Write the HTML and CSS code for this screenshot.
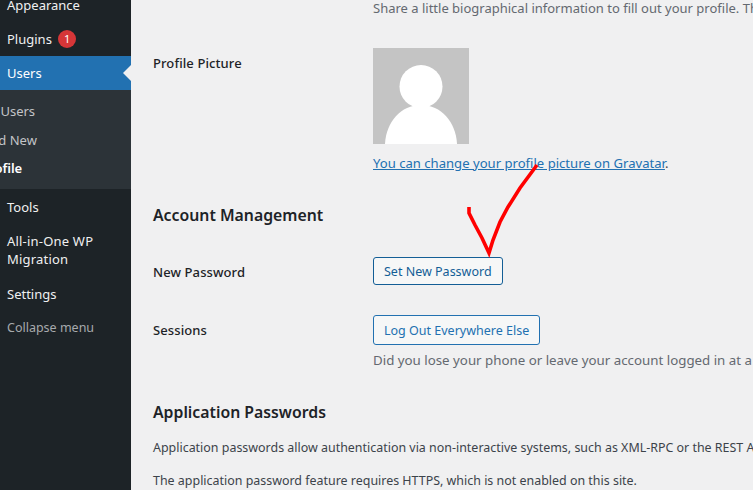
FILE: index.html
```html
<!DOCTYPE html>
<html lang="en">
<head>
<meta charset="utf-8">
<title>Profile</title>
<link rel="stylesheet" href="styles.css">
</head>
<body>
<div class="page">
  <nav class="sidebar">
    <div class="menu-item first">Appearance</div>
    <div class="menu-item">Plugins <span class="badge">1</span></div>
    <div class="menu-item current">Users</div>
    <div class="submenu">
      <div class="sub-item">All Users</div>
      <div class="sub-item">Add New</div>
      <div class="sub-item active">Profile</div>
    </div>
    <div class="menu-item after-sub">Tools</div>
    <div class="menu-item wp-migration">All-in-One WP Migration</div>
    <div class="menu-item settings">Settings</div>
    <div class="menu-item collapse">Collapse menu</div>
  </nav>
  <main class="content">
    <p class="desc intro">Share a little biographical information to fill out your profile. This may be shown publicly.</p>
    <div class="row picture-row">
      <div class="label">Profile Picture</div>
      <div class="field">
        <svg class="avatar" viewBox="0 0 96 96" width="96" height="96" aria-hidden="true">
          <rect width="96" height="96" fill="#c4c4c4"/>
          <circle cx="48" cy="38.5" r="21.5" fill="#fff"/>
          <path d="M12 96C13 74 28 57 48 57S83 74 84 96Z" fill="#fff"/>
        </svg>
        <p class="gravatar"><a href="#">You can change your profile picture on Gravatar</a>.</p>
      </div>
    </div>
    <h2 class="heading account">Account Management</h2>
    <div class="row password-row">
      <div class="label">New Password</div>
      <div class="field"><button class="btn dark">Set New Password</button></div>
    </div>
    <div class="row sessions-row">
      <div class="label">Sessions</div>
      <div class="field">
        <button class="btn">Log Out Everywhere Else</button>
        <p class="desc lost">Did you lose your phone or leave your account logged in at a public computer? You can log out everywhere else.</p>
      </div>
    </div>
    <h2 class="heading apps">Application Passwords</h2>
    <p class="para first-para">Application passwords allow authentication via non-interactive systems, such as XML-RPC or the REST API, without providing your actual password.</p>
    <p class="para">The application password feature requires HTTPS, which is not enabled on this site.</p>
  </main>
  <svg class="check" viewBox="0 0 753 490" width="753" height="490" aria-hidden="true">
    <polyline points="469,207 469,213 475,225 482,238 489,253 493,240 500,222 508,207 520,188 537,165" fill="none" stroke="#f00" stroke-width="3.6"/>
  </svg>
</div>
</body>
</html>
```
FILE: styles.css
```css
* { box-sizing: border-box; }
html, body { margin: 0; padding: 0; }
body {
  width: 753px;
  height: 490px;
  overflow: hidden;
  background: #f0f0f1;
  font-family: "Noto Sans", "Open Sans", sans-serif;
  font-size: 13px;
  line-height: 18px;
  color: #3c434a;
}
.page { position: relative; display: flex; width: 753px; height: 490px; overflow: hidden; }
.sidebar { flex: 0 0 131px; height: 490px; background: #1d2327; overflow: hidden; color: #f0f0f1; }
.menu-item { padding: 8px 7px; }
.menu-item.first { margin-top: -12px; }
.menu-item.current { background: #2271b1; color: #fff; position: relative; }
.menu-item.current::after {
  content: "";
  position: absolute;
  right: 0;
  top: 9px;
  border: 8px solid transparent;
  border-right-color: #f0f0f1;
  border-left-width: 0;
}
.badge {
  display: inline-block;
  vertical-align: top;
  width: 18px;
  height: 18px;
  margin-left: 3px;
  border-radius: 50%;
  background: #d63638;
  color: #fff;
  font-size: 11px;
  line-height: 18px;
  text-align: center;
}
.submenu { background: #2c3338; padding: 7px 0 7px; height: 99px; color: #c3c4c7; }
.sub-item { margin-left: -18px; height: 28.5px; line-height: 28.5px; white-space: nowrap; }
.sub-item.active { color: #fff; font-weight: 600; margin-left: -19px; }
.after-sub { padding-top: 9px; }
.wp-migration { letter-spacing: 0.2px; }
.settings { padding-top: 9px; }
.collapse { color: #a7aaad; padding-top: 8px; font-size: 12.5px; }
.content { flex: 1; min-width: 0; padding-left: 22px; overflow: hidden; }
.desc { margin: 0; white-space: nowrap; color: #646970; }
.intro { margin: -1px 0 0 220px; }
.row { display: grid; grid-template-columns: 220px 1fr; }
.label { color: #1d2327; font-weight: 500; white-space: nowrap; letter-spacing: 0.1px; }
.picture-row { margin-top: 31px; }
.picture-row .label { margin-top: 6px; }
.avatar { display: block; }
.gravatar { margin: 10px 0 0; white-space: nowrap; font-size: 13.1px; }
.gravatar a { color: #2271b1; }
.heading { margin: 0; font-size: 15.8px; line-height: 22px; font-weight: 600; color: #1d2327; }
.account { margin-top: 32px; }
.password-row { margin-top: 31px; }
.password-row .label { margin-top: 6px; }
.btn {
  display: block;
  height: 28px;
  padding: 2px 10px 0;
  background: #f6f7f7;
  border: 1px solid #2271b1;
  border-radius: 3px;
  color: #2271b1;
  font: inherit;
  font-size: 12.5px;
  white-space: nowrap;
}
.btn.dark { border-color: #135e96; color: #135e96; background: #f6f7f7; }
.sessions-row { margin-top: 30px; }
.sessions-row .label { margin-top: 6px; }
.sessions-row .btn { height: 30px; }
.lost { margin-top: 6px; font-size: 13.3px; }
.apps { margin-top: 32px; }
.para { margin: 0; white-space: nowrap; font-size: 12.45px; }
.first-para { margin-top: 16px; }
.para + .para { margin-top: 15px; }
.check { position: absolute; left: 0; top: 0; pointer-events: none; }
```
